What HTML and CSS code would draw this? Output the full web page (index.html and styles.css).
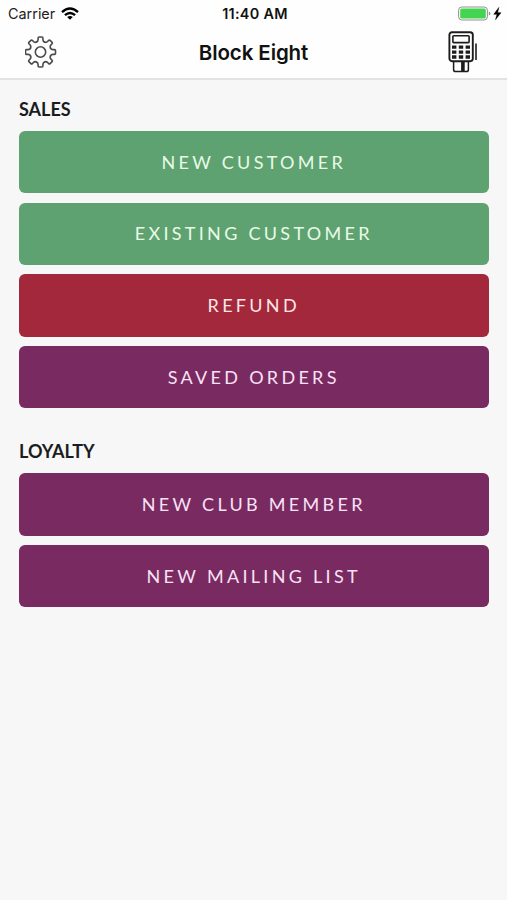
FILE: index.html
```html
<!DOCTYPE html>
<html lang="en">
<head>
    <meta charset="UTF-8">
    <meta name="viewport" content="width=device-width, initial-scale=1.0">
    <title>Block Eight</title>
    <link rel="stylesheet" href="styles.css">
</head>
<body>

<header>
    <div class="status">
        <div class="carrier">
            <span>Carrier</span>
            <svg width="18" height="13" viewBox="0 0 18 13" fill="none" stroke="#000" stroke-width="2.4">
                <path d="M1 5.1Q9-2 17 5.1"/>
                <path d="M3.9 8.2Q9 3.8 14.1 8.2"/>
                <path d="M6.2 10Q9 7.8 11.8 10L9 12.8z" fill="#000" stroke="none"/>
            </svg>
        </div>
        <div class="time">11:40 AM</div>
        <div class="battery">
            <svg width="44" height="15" viewBox="0 0 44 15">
                <rect x=".6" y="1" width="28.8" height="13" rx="3.2" fill="#fff" stroke="#8f8f8f"/>
                <rect x="2.2" y="2.6" width="25.6" height="9.8" rx="1.5" fill="#43d551"/>
                <path d="M30.8 5.5q1.6.5 1.6 2t-1.6 2z" fill="#8f8f8f"/>
                <path d="M40.8 1.5L35.8 8.3H39L37.6 13.6L43 6.7H39.6z" fill="#000" stroke="#000" stroke-width=".5"/>
            </svg>
        </div>
    </div>
    <div class="navbar">
        <svg class="gear" width="32" height="32" viewBox="-15.5 -16 32 32" fill="none" stroke="#4a4a4a" stroke-width="1.6" stroke-linejoin="round" stroke-linecap="round">
            <defs>
                <path id="tooth" d="M-4.1-9.9C-2.8-10.4-2.4-11.2-2.4-12.4V-14Q-2.4-15-1.4-15H1.4Q2.4-15 2.4-14V-12.4C2.4-11.2 2.8-10.4 4.1-9.9"/>
            </defs>
            <use href="#tooth"/>
            <use href="#tooth" transform="rotate(45)"/>
            <use href="#tooth" transform="rotate(90)"/>
            <use href="#tooth" transform="rotate(135)"/>
            <use href="#tooth" transform="rotate(180)"/>
            <use href="#tooth" transform="rotate(225)"/>
            <use href="#tooth" transform="rotate(270)"/>
            <use href="#tooth" transform="rotate(315)"/>
            <circle r="5.2"/>
        </svg>
        <h1>Block Eight</h1>
        <svg class="terminal" width="30" height="42" viewBox="0 0 30 42" fill="none" stroke="#1c1c1c">
            <rect x="1.4" y="1.2" width="23.4" height="29" rx="2.6" stroke-width="1.9"/>
            <rect x="4.9" y="4.8" width="16.2" height="6.8" rx=".8" stroke-width="1.6"/>
            <path d="M4 16.2H8.4M10.8 16.2H15.2M17.6 16.2H22M4 21.1H8.4M10.8 21.1H15.2M17.6 21.1H22M4 26H8.4M10.8 26H15.2M17.6 26H22" stroke-width="3.3"/>
            <path d="M5.6 31V38.4Q5.6 40.6 7.6 40.6H18.4Q20.4 40.6 20.4 38.4V31" stroke-width="1.5"/>
            <path d="M14.9 31V41" stroke-width="3.6"/>
            <path d="M28 12.5V29" stroke-width="1.6"/>
        </svg>
    </div>
</header>

<main>
    <h2>SALES</h2>
    <div class="buttons">
        <button class="green">NEW CUSTOMER</button>
        <button class="green">EXISTING CUSTOMER</button>
        <button class="red">REFUND</button>
        <button class="purple">SAVED ORDERS</button>
    </div>
    <h2>LOYALTY</h2>
    <div class="buttons">
        <button class="purple">NEW CLUB MEMBER</button>
        <button class="purple">NEW MAILING LIST</button>
    </div>
</main>

</body>
</html>
```
FILE: styles.css
```css
body {
    margin: 0;
    min-height: 900px;
    background: #f7f7f7;
    font-family: Lato, sans-serif;
    color: #1b1c20;
}
header {
    box-sizing: border-box;
    height: 80px;
    background: #fefefe;
    border-bottom: 2px solid #e2e2e2;
    font-family: Inter, sans-serif;
}
.status {
    display: grid;
    grid-template-columns: 1fr auto 1fr;
    align-items: center;
    height: 27px;
    padding: 0 5px 0 8px;
    font-size: 14.4px;
}
.carrier {
    display: flex;
    align-items: center;
    gap: 6px;
    color: #222;
}
.time {
    font-weight: 600;
    letter-spacing: 0.3px;
    color: #111;
}
.battery {
    display: flex;
    justify-content: flex-end;
}
.navbar {
    display: grid;
    grid-template-columns: 1fr auto 1fr;
    align-items: center;
    height: 50px;
    padding: 0 29px;
}
.gear {
    margin-left: -4px;
}
.terminal {
    justify-self: end;
}
h1 {
    margin: 0;
    font-size: 20.5px;
    font-weight: 600;
    letter-spacing: -0.1px;
    color: #111;
}
main {
    padding: 18px 18.5px 0 19px;
}
h2 {
    margin: 0 0 11px;
    font-size: 18px;
    font-weight: 700;
    line-height: 22px;
}
.buttons {
    display: flex;
    flex-direction: column;
    gap: 9.4px;
    margin-bottom: 32px;
}
button {
    height: 62.3px;
    padding: 0 0 1px;
    border: none;
    border-radius: 6px;
    font-family: Lato, sans-serif;
    font-size: 18px;
    letter-spacing: 3.3px;
    color: #fff;
}
.green {
    background: #5fa271;
    color: #e9fbe6;
}
.red {
    background: #a3283c;
    color: #fde6e6;
}
.purple {
    background: #792a61;
    color: #f9e2f5;
}
```
